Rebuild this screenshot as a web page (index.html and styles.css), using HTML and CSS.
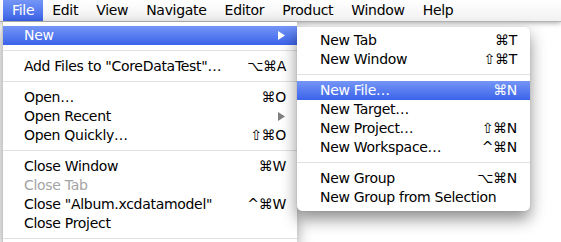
FILE: index.html
```html
<!DOCTYPE html>
<html>

<head>
  <meta charset="utf-8">
  <link rel="stylesheet" href="styles.css">
</head>

<body>
  <div class="menubar">
    <span class="menubar-item active">File</span>
    <span class="menubar-item">Edit</span>
    <span class="menubar-item">View</span>
    <span class="menubar-item">Navigate</span>
    <span class="menubar-item">Editor</span>
    <span class="menubar-item">Product</span>
    <span class="menubar-item">Window</span>
    <span class="menubar-item">Help</span>
  </div>

  <div class="menu file-menu">
    <div class="item selected">
      <span>New</span>
      <svg class="arrow" width="7" height="9" viewBox="0 0 7 9"><polygon points="0,0 7,4.5 0,9" /></svg>
    </div>
    <div class="separator"></div>
    <div class="item"><span>Add Files to "CoreDataTest"…</span><span class="key">⌥⌘A</span></div>
    <div class="separator"></div>
    <div class="item"><span>Open…</span><span class="key">⌘O</span></div>
    <div class="item">
      <span>Open Recent</span>
      <svg class="arrow" width="7" height="9" viewBox="0 0 7 9"><polygon points="0,0 7,4.5 0,9" /></svg>
    </div>
    <div class="item"><span>Open Quickly…</span><span class="key">⇧⌘O</span></div>
    <div class="separator"></div>
    <div class="item"><span>Close Window</span><span class="key">⌘W</span></div>
    <div class="item disabled"><span>Close Tab</span></div>
    <div class="item"><span>Close "Album.xcdatamodel"</span><span class="key">^⌘W</span></div>
    <div class="item"><span>Close Project</span></div>
    <div class="separator"></div>
  </div>

  <div class="menu submenu">
    <div class="item"><span>New Tab</span><span class="key">⌘T</span></div>
    <div class="item"><span>New Window</span><span class="key">⇧⌘T</span></div>
    <div class="separator"></div>
    <div class="item selected"><span>New File…</span><span class="key">⌘N</span></div>
    <div class="item"><span>New Target…</span></div>
    <div class="item"><span>New Project…</span><span class="key">⇧⌘N</span></div>
    <div class="item"><span>New Workspace…</span><span class="key">^⌘N</span></div>
    <div class="separator"></div>
    <div class="item"><span>New Group</span><span class="key">⌥⌘N</span></div>
    <div class="item"><span>New Group from Selection</span></div>
  </div>
</body>

</html>
```

FILE: styles.css
```css
* {
  box-sizing: border-box;
}

body {
  margin: 0;
  height: 100vh;
  overflow: hidden;
  background: #fff;
  color: #000;
  font-family: "DejaVu Sans", "Liberation Sans", sans-serif;
  font-size: 14px;
  letter-spacing: -0.3px;
}

.menubar {
  position: relative;
  z-index: 1;
  display: flex;
  height: 22px;
  padding-left: 3px;
  line-height: 21px;
  background: linear-gradient(#ffffff, #f1f1f1);
  border-bottom: 1px solid #b4b4b4;
  box-shadow: 0 1px 5px rgba(0, 0, 0, 0.35);
}

.menubar-item {
  padding: 0 9px;
}

.menubar-item.active,
.item.selected {
  background: linear-gradient(#7596f6, #3b63ea);
  color: white;
}

.menu {
  position: absolute;
  z-index: 2;
  background: #fff;
  padding: 4px 0;
}

.file-menu {
  top: 22px;
  bottom: 0;
  left: 2px;
  width: 295px;
  overflow: hidden;
  border-left: 1px solid #c8c8c8;
  box-shadow: 0 6px 14px rgba(0, 0, 0, 0.4);
}

.submenu {
  z-index: 3;
  top: 27px;
  left: 297px;
  width: 233px;
  border-radius: 0 4px 5px 5px;
  box-shadow: 0 8px 16px rgba(0, 0, 0, 0.45), 0 0 1px rgba(0, 0, 0, 0.3);
}

.item {
  display: flex;
  justify-content: space-between;
  align-items: center;
  height: 19px;
  line-height: 19px;
  padding: 0 11px 0 21px;
  white-space: nowrap;
}

.submenu .item {
  padding: 0 13px 0 23px;
}

.item.disabled {
  color: #a4a4a4;
}

.arrow {
  fill: #808080;
  margin-right: 1px;
}

.item.selected .arrow {
  fill: white;
}

.separator {
  flex: none;
  height: 1px;
  margin: 5px 0 6px;
  background: #e0e0e0;
}
```
